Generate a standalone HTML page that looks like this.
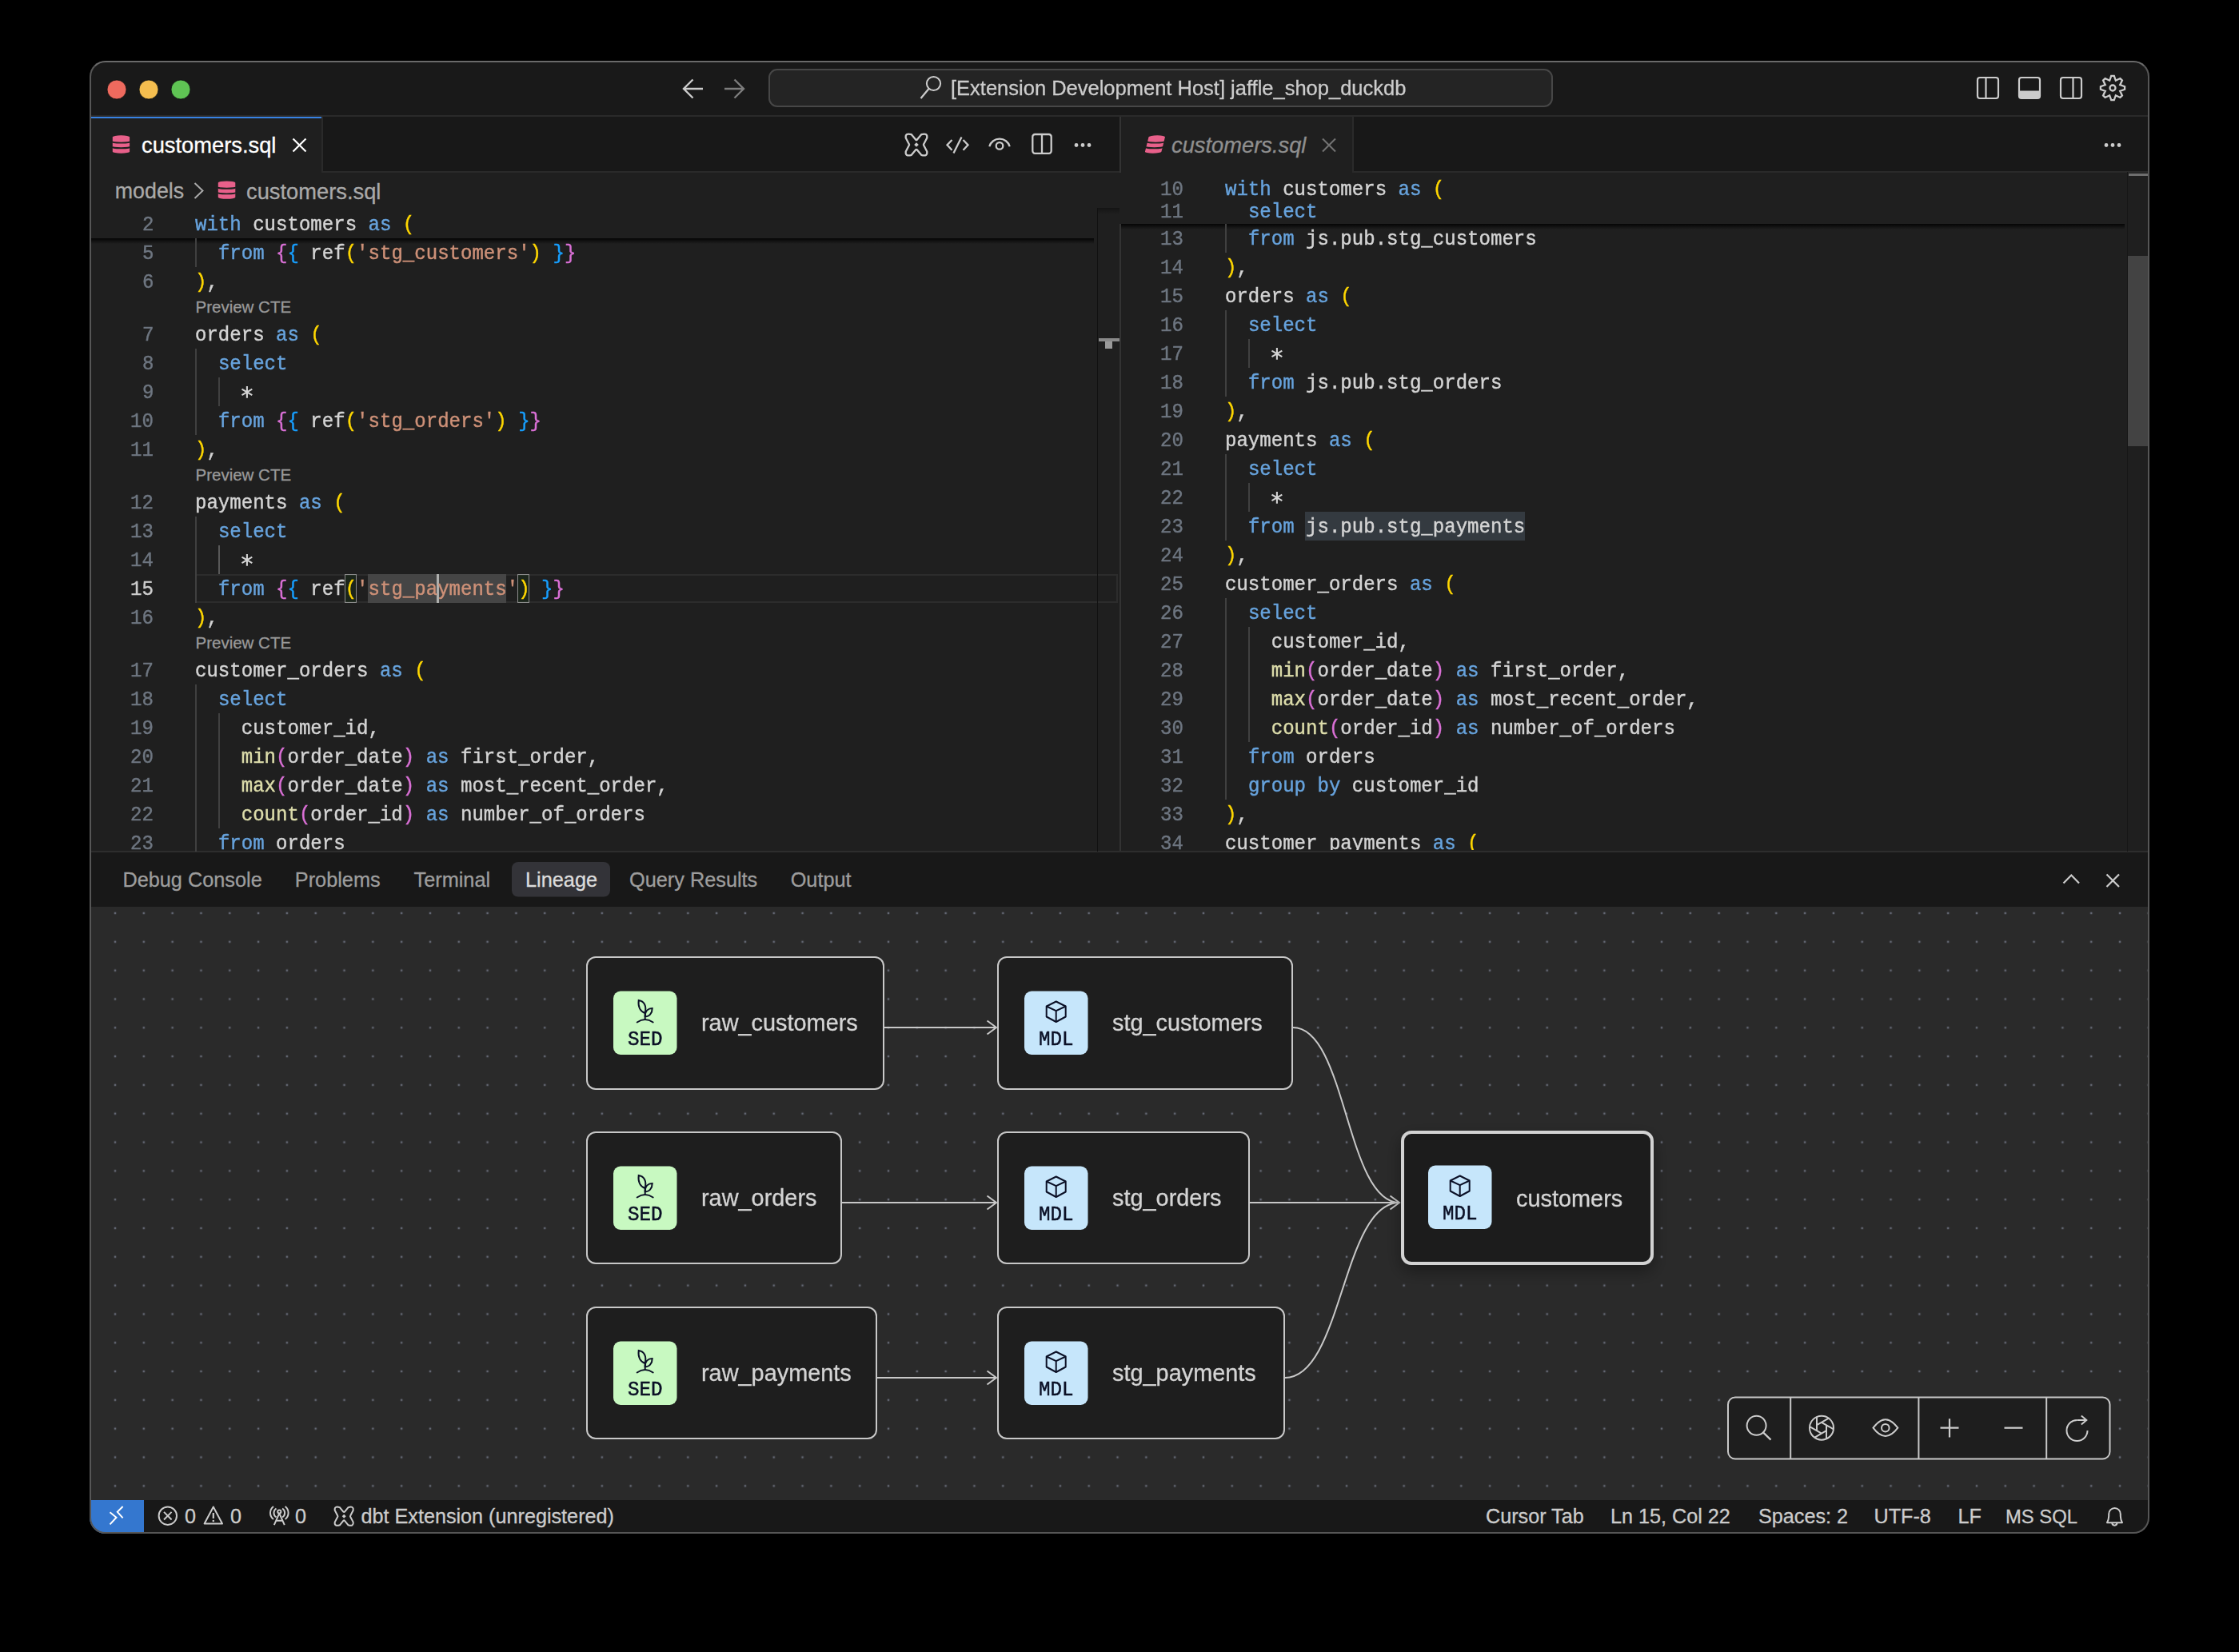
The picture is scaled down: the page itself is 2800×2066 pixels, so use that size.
<!DOCTYPE html>
<html><head><meta charset="utf-8"><title>VS Code - customers.sql</title>
<style>
*{box-sizing:border-box;margin:0;padding:0}
html,body{width:2800px;height:2066px;background:#000;overflow:hidden}
body{position:relative;font-family:"Liberation Sans",sans-serif;color:#ccc}
.a{position:absolute}
#win{position:absolute;left:112px;top:76px;width:2576px;height:1842px;border-radius:20px;overflow:hidden;background:#1f1f1f}
#P{position:absolute;left:-112px;top:-76px;width:2800px;height:2066px}
#winborder{position:absolute;left:112px;top:76px;width:2576px;height:1842px;border-radius:20px;border:2px solid #565656;border-top-color:#6a6a6a;pointer-events:none}
.t{position:absolute;white-space:pre;line-height:1;-webkit-text-stroke-width:0.3px}
svg{position:absolute;left:0;top:0}
</style></head><body>
<div id="win"><div id="P">
<div class="a" style="left:112px;top:76px;width:2576px;height:68px;background:#191919;"></div>
<div class="a" style="left:112px;top:144px;width:2576px;height:2px;background:#2a2a2a;"></div>
<div class="a" style="left:112px;top:146px;width:2576px;height:70px;background:#181818;"></div>
<div class="a" style="left:112px;top:214px;width:2576px;height:2px;background:#2a2a2a;"></div>
<div class="a" style="left:112px;top:146px;width:290px;height:70px;background:#1f1f1f;"></div>
<div class="a" style="left:112px;top:146px;width:290px;height:2px;background:#3782e3;"></div>
<div class="a" style="left:402px;top:146px;width:2px;height:68px;background:#2a2a2a;"></div>
<div class="a" style="left:1402px;top:146px;width:289px;height:70px;background:#1f1f1f;"></div>
<div class="a" style="left:1691px;top:146px;width:2px;height:68px;background:#2a2a2a;"></div>
<div class="a" style="left:112px;top:216px;width:1288px;height:849px;background:#1f1f1f;"></div>
<div class="a" style="left:1400px;top:146px;width:2px;height:918px;background:#333333;"></div>
<div class="a" style="left:1402px;top:216px;width:1286px;height:849px;background:#1f1f1f;"></div>
<div class="a" style="left:112px;top:1064px;width:2576px;height:2px;background:#2d2d2d;"></div>
<div class="a" style="left:112px;top:1066px;width:2576px;height:68px;background:#181818;"></div>
<div class="a" style="left:112px;top:1134px;width:2576px;height:742px;background:#2a2a2a;"></div>
<div class="a" style="left:112px;top:1876px;width:2576px;height:42px;background:#181818;"></div>
<div class="a" style="left:112px;top:1876px;width:68px;height:42px;background:#3477cf;"></div>
<div class="a" style="left:1372px;top:260px;width:1px;height:805px;background:#161616;"></div>
<div class="a" style="left:1372px;top:260px;width:28px;height:8px;background:linear-gradient(#141414,#1f1f1f);"></div>
<div class="a" style="left:1374px;top:423px;width:26px;height:4px;background:#8a8a8a;"></div>
<div class="a" style="left:1382px;top:427px;width:9px;height:9px;background:#9a9a9a;"></div>
<div class="a" style="left:2660px;top:215px;width:1px;height:850px;background:#161616;"></div>
<div class="a" style="left:2661px;top:320px;width:27px;height:238px;background:#434343;"></div>
<div class="a" style="left:2662px;top:217px;width:26px;height:3px;background:#6e6e6e;"></div>
<div class="a" style="left:1400px;top:216px;width:2px;height:64px;background:#1f1f1f;"></div>
<div class="a" style="left:112px;top:298px;width:1256px;height:7px;background:linear-gradient(rgba(0,0,0,.85),rgba(0,0,0,0));"></div>
<div class="a" style="left:1402px;top:280px;width:1255px;height:7px;background:linear-gradient(rgba(0,0,0,.85),rgba(0,0,0,0));"></div>
<div class="a" style="left:244px;top:718px;width:1154px;height:36px;background:transparent;border:2px solid #2c2c2c;"></div>
<div class="a" style="left:1372px;top:260px;width:1px;height:805px;background:#111111;"></div>
<div class="a" style="left:460px;top:718px;width:173px;height:36px;background:#454545;"></div>
<div class="a" style="left:431px;top:718px;width:15px;height:36px;background:rgba(0,100,0,.10);border:1.5px solid #8b8b8b;"></div>
<div class="a" style="left:647px;top:718px;width:15px;height:36px;background:rgba(0,100,0,.10);border:1.5px solid #8b8b8b;"></div>
<div class="a" style="left:244px;top:298px;width:2px;height:36px;background:#404040;"></div>
<div class="a" style="left:244px;top:436px;width:2px;height:108px;background:#404040;"></div>
<div class="a" style="left:244px;top:646px;width:2px;height:108px;background:#404040;"></div>
<div class="a" style="left:244px;top:856px;width:2px;height:209px;background:#404040;"></div>
<div class="a" style="left:273px;top:472px;width:2px;height:36px;background:#404040;"></div>
<div class="a" style="left:273px;top:682px;width:2px;height:36px;background:#585858;"></div>
<div class="a" style="left:273px;top:892px;width:2px;height:144px;background:#404040;"></div>
<div class="a" style="left:546px;top:718px;width:3px;height:36px;background:#aeafad;"></div>
<div class="a" style="left:1632px;top:640px;width:275px;height:36px;background:#343a40;"></div>
<div class="a" style="left:1532px;top:280px;width:2px;height:36px;background:#404040;"></div>
<div class="a" style="left:1532px;top:388px;width:2px;height:108px;background:#404040;"></div>
<div class="a" style="left:1532px;top:568px;width:2px;height:108px;background:#404040;"></div>
<div class="a" style="left:1532px;top:748px;width:2px;height:252px;background:#404040;"></div>
<div class="a" style="left:1561px;top:424px;width:2px;height:36px;background:#404040;"></div>
<div class="a" style="left:1561px;top:604px;width:2px;height:36px;background:#404040;"></div>
<div class="a" style="left:1561px;top:784px;width:2px;height:144px;background:#404040;"></div>
<svg width="2800" height="2066" viewBox="0 0 2800 2066">
<circle cx="146" cy="112" r="12" fill="#ee6a5e" stroke="#0d1010" stroke-width="0.8"/>
<circle cx="186" cy="112" r="12" fill="#f5be4f" stroke="#0d1010" stroke-width="0.8"/>
<circle cx="226" cy="112" r="12" fill="#5fc454" stroke="#0d1010" stroke-width="0.8"/>
<path d="M855 111H879M866.5 99.5L855 111L866.5 122.5" fill="none" stroke="#cccccc" stroke-width="2.4"/>
<path d="M906 111H930M918.5 99.5L930 111L918.5 122.5" fill="none" stroke="#7d7d7d" stroke-width="2.4"/>
<rect x="962" y="87" width="979" height="46" rx="10" fill="#242424" stroke="#474747" stroke-width="2"/>
<circle cx="1167.5" cy="104.5" r="8.6" fill="none" stroke="#cccccc" stroke-width="2"/>
<path d="M1161.5 111L1151.5 123" stroke="#cccccc" stroke-width="2.2"/>
<rect x="2473" y="97" width="26" height="26" rx="3" fill="none" stroke="#cccccc" stroke-width="2.2"/><path d="M2483.5 97V123" stroke="#cccccc" stroke-width="2.2"/>
<rect x="2525" y="97" width="26" height="26" rx="3" fill="none" stroke="#cccccc" stroke-width="2.2"/><path d="M2525 113.5H2551V120A3 3 0 0 1 2548 123H2528A3 3 0 0 1 2525 120Z" fill="#cccccc"/>
<rect x="2577" y="97" width="26" height="26" rx="3" fill="none" stroke="#cccccc" stroke-width="2.2"/><path d="M2592.5 97V123" stroke="#cccccc" stroke-width="2.2"/>
<path d="M2638.17 100.76 L2640.21 94.91 L2643.79 94.91 L2645.83 100.76 L2651.41 98.06 L2653.94 100.59 L2651.24 106.17 L2657.09 108.21 L2657.09 111.79 L2651.24 113.83 L2653.94 119.41 L2651.41 121.94 L2645.83 119.24 L2643.79 125.09 L2640.21 125.09 L2638.17 119.24 L2632.59 121.94 L2630.06 119.41 L2632.76 113.83 L2626.91 111.79 L2626.91 108.21 L2632.76 106.17 L2630.06 100.59 L2632.59 98.06Z" fill="none" stroke="#cccccc" stroke-width="2.3" stroke-linejoin="miter"/><circle cx="2642" cy="110" r="3.5" fill="none" stroke="#cccccc" stroke-width="2.3"/>
<g transform="translate(140.8 169.3)"><path d="M0 2.0 A10.65 2.0 0 0 1 21.3 2.0 V20.4 A10.65 2.0 0 0 1 0 20.4 Z" fill="#e8608a"/><path d="M-1 7.73 A11.65 1.6 0 0 0 22.3 7.73" fill="none" stroke="#1f1f1f" stroke-width="1.9"/><path d="M-1 14.34 A11.65 1.6 0 0 0 22.3 14.34" fill="none" stroke="#1f1f1f" stroke-width="1.9"/></g>
<path d="M366.5 173.5L382.5 189.5M382.5 173.5L366.5 189.5" stroke="#ffffff" stroke-width="2.2"/>
<g transform="translate(1437 169.3) skewX(-14)"><path d="M0 2.0 A10.25 2.0 0 0 1 20.5 2.0 V20.4 A10.25 2.0 0 0 1 0 20.4 Z" fill="#e8608a"/><path d="M-1 7.73 A11.25 1.6 0 0 0 21.5 7.73" fill="none" stroke="#1f1f1f" stroke-width="1.9"/><path d="M-1 14.34 A11.25 1.6 0 0 0 21.5 14.34" fill="none" stroke="#1f1f1f" stroke-width="1.9"/></g>
<path d="M1654 173.5L1670 189.5M1670 173.5L1654 189.5" stroke="#737373" stroke-width="2"/>
<circle cx="2634" cy="181.5" r="2.4" fill="#cccccc"/><circle cx="2642" cy="181.5" r="2.4" fill="#cccccc"/><circle cx="2650" cy="181.5" r="2.4" fill="#cccccc"/>
<path d="M1139.85 168.22 L1145.24 174.75 Q1146.00 175.32 1146.76 174.75 L1152.15 168.22 Q1160.20 165.86 1159.25 172.48 L1155.09 180.43 Q1154.71 181.00 1155.09 181.57 L1159.25 189.52 Q1160.20 196.14 1152.15 193.78 L1146.76 187.25 Q1146.00 186.68 1145.24 187.25 L1139.85 193.78 Q1131.80 196.14 1132.75 189.52 L1136.91 181.57 Q1137.29 181.00 1136.91 180.43 L1132.75 172.48 Q1131.80 165.86 1139.85 168.22 Z" fill="none" stroke="#cccccc" stroke-width="2.3" stroke-linejoin="round"/><path d="M1146.00 178.16 L1148.84 181.00 L1146.00 183.84 L1143.16 181.00 Z" fill="#cccccc"/>
<path d="M1190.5 175L1184.5 181.3L1190.5 187.7M1204.5 175L1210.5 181.3L1204.5 187.7M1202.5 171.5L1192.5 191.5" fill="none" stroke="#cccccc" stroke-width="2.3"/>
<path d="M1237.3 183.2A13.2 13.2 0 0 1 1262.7 183.2" fill="none" stroke="#cccccc" stroke-width="2.3"/><circle cx="1250" cy="182.4" r="4.3" fill="none" stroke="#cccccc" stroke-width="2.3"/>
<rect x="1291.3" y="168" width="23.4" height="23.8" rx="3" fill="none" stroke="#cccccc" stroke-width="2.3"/><path d="M1303 168V191.8" stroke="#cccccc" stroke-width="2.3"/>
<circle cx="1346" cy="181.5" r="2.4" fill="#cccccc"/><circle cx="1354" cy="181.5" r="2.4" fill="#cccccc"/><circle cx="1362" cy="181.5" r="2.4" fill="#cccccc"/>
<path d="M243.5 229L253.5 238.5L243.5 248" fill="none" stroke="#a9a9a9" stroke-width="2"/>
<g transform="translate(272.8 226.4)"><path d="M0 2.0 A10.75 2.0 0 0 1 21.5 2.0 V20.4 A10.75 2.0 0 0 1 0 20.4 Z" fill="#e8608a"/><path d="M-1 7.73 A11.75 1.6 0 0 0 22.5 7.73" fill="none" stroke="#1f1f1f" stroke-width="1.9"/><path d="M-1 14.34 A11.75 1.6 0 0 0 22.5 14.34" fill="none" stroke="#1f1f1f" stroke-width="1.9"/></g>
<path d="M308.90 483.00L308.90 497.80M302.49 486.70L315.31 494.10M315.31 486.70L302.49 494.10" stroke="#d4d4d4" stroke-width="2.1" stroke-linecap="butt"/>
<path d="M308.90 693.00L308.90 707.80M302.49 696.70L315.31 704.10M315.31 696.70L302.49 704.10" stroke="#d4d4d4" stroke-width="2.1" stroke-linecap="butt"/>
<path d="M1596.90 435.00L1596.90 449.80M1590.49 438.70L1603.31 446.10M1603.31 438.70L1590.49 446.10" stroke="#d4d4d4" stroke-width="2.1" stroke-linecap="butt"/>
<path d="M1596.90 615.00L1596.90 629.80M1590.49 618.70L1603.31 626.10M1603.31 618.70L1590.49 626.10" stroke="#d4d4d4" stroke-width="2.1" stroke-linecap="butt"/>
<rect x="640" y="1078" width="123" height="43.5" rx="8" fill="#333338"/>
<path d="M2580.5 1104.5L2590.3 1094.5L2600 1104.5" fill="none" stroke="#cccccc" stroke-width="2.2"/>
<path d="M2634.5 1093.5L2650 1109M2650 1093.5L2634.5 1109" fill="none" stroke="#cccccc" stroke-width="2.2"/>
<defs><pattern id="dots" x="144" y="1142" width="35.815" height="35.815" patternUnits="userSpaceOnUse"><rect x="-1.25" y="-1.25" width="2.5" height="2.5" fill="#636773"/><rect x="34.565" y="-1.25" width="2.5" height="2.5" fill="#636773"/><rect x="-1.25" y="34.565" width="2.5" height="2.5" fill="#636773"/><rect x="34.565" y="34.565" width="2.5" height="2.5" fill="#636773"/></pattern><filter id="sh" x="-20%" y="-20%" width="140%" height="150%"><feDropShadow dx="0" dy="8" stdDeviation="10" flood-color="#000" flood-opacity="0.35"/></filter></defs>
<rect x="112" y="1134" width="2576" height="742" fill="url(#dots)"/>
<path d="M1106 1285C1176.0 1285 1176.0 1285 1246 1285" fill="none" stroke="#c8c8c8" stroke-width="2"/><path d="M1234.5 1276.5L1246 1285L1234.5 1293.5" fill="none" stroke="#c8c8c8" stroke-width="2"/>
<path d="M1053 1504C1149.5 1504 1149.5 1504 1246 1504" fill="none" stroke="#c8c8c8" stroke-width="2"/><path d="M1234.5 1495.5L1246 1504L1234.5 1512.5" fill="none" stroke="#c8c8c8" stroke-width="2"/>
<path d="M1097 1723C1171.5 1723 1171.5 1723 1246 1723" fill="none" stroke="#c8c8c8" stroke-width="2"/><path d="M1234.5 1714.5L1246 1723L1234.5 1731.5" fill="none" stroke="#c8c8c8" stroke-width="2"/>
<path d="M1617 1285C1683.5 1285 1683.5 1504 1750 1504" fill="none" stroke="#c8c8c8" stroke-width="2"/>
<path d="M1563 1504C1656.5 1504 1656.5 1504 1750 1504" fill="none" stroke="#c8c8c8" stroke-width="2"/>
<path d="M1607 1723C1678.5 1723 1678.5 1504 1750 1504" fill="none" stroke="#c8c8c8" stroke-width="2"/>
<path d="M1738.5 1495.5L1750 1504L1738.5 1512.5" fill="none" stroke="#c8c8c8" stroke-width="2"/>
<rect x="734.0" y="1197.0" width="371" height="165" rx="11" fill="#1e1e1e" stroke="#c8c8c8" stroke-width="2"/>
<rect x="767" y="1239.5" width="79.5" height="79.5" rx="9" fill="#c8f9c1"/>
<g transform="translate(806.7 1265.0)" fill="none" stroke="#0b1026" stroke-width="2" stroke-linecap="round"><path d="M-10 13.5Q0 6.5 10 13.5"/><path d="M0 10V2"/><path d="M0 2C-6 0 -9 -6 -8 -14C-1 -13 2 -7 0 2Z"/><path d="M0 6C5 7 9 2 9 -4C4 -4 0 -1 0 6Z"/></g>
<rect x="1248.0" y="1197.0" width="368" height="165" rx="11" fill="#1e1e1e" stroke="#c8c8c8" stroke-width="2"/>
<rect x="1281" y="1239.5" width="79.5" height="79.5" rx="9" fill="#c6e6fb"/>
<g transform="translate(1320.7 1265.0)" fill="none" stroke="#0b1026" stroke-width="2" stroke-linejoin="round"><path d="M0 -12.5L12 -6.5V6.5L0 13L-12 6.5V-6.5Z"/><path d="M-12 -6.5L0 -0.8L12 -6.5M0 -0.8V13"/></g>
<rect x="734.0" y="1416.0" width="318" height="164" rx="11" fill="#1e1e1e" stroke="#c8c8c8" stroke-width="2"/>
<rect x="767" y="1458.5" width="79.5" height="79.5" rx="9" fill="#c8f9c1"/>
<g transform="translate(806.7 1484.0)" fill="none" stroke="#0b1026" stroke-width="2" stroke-linecap="round"><path d="M-10 13.5Q0 6.5 10 13.5"/><path d="M0 10V2"/><path d="M0 2C-6 0 -9 -6 -8 -14C-1 -13 2 -7 0 2Z"/><path d="M0 6C5 7 9 2 9 -4C4 -4 0 -1 0 6Z"/></g>
<rect x="1248.0" y="1416.0" width="314" height="164" rx="11" fill="#1e1e1e" stroke="#c8c8c8" stroke-width="2"/>
<rect x="1281" y="1458.5" width="79.5" height="79.5" rx="9" fill="#c6e6fb"/>
<g transform="translate(1320.7 1484.0)" fill="none" stroke="#0b1026" stroke-width="2" stroke-linejoin="round"><path d="M0 -12.5L12 -6.5V6.5L0 13L-12 6.5V-6.5Z"/><path d="M-12 -6.5L0 -0.8L12 -6.5M0 -0.8V13"/></g>
<rect x="734.0" y="1635.0" width="362" height="164" rx="11" fill="#1e1e1e" stroke="#c8c8c8" stroke-width="2"/>
<rect x="767" y="1677.5" width="79.5" height="79.5" rx="9" fill="#c8f9c1"/>
<g transform="translate(806.7 1703.0)" fill="none" stroke="#0b1026" stroke-width="2" stroke-linecap="round"><path d="M-10 13.5Q0 6.5 10 13.5"/><path d="M0 10V2"/><path d="M0 2C-6 0 -9 -6 -8 -14C-1 -13 2 -7 0 2Z"/><path d="M0 6C5 7 9 2 9 -4C4 -4 0 -1 0 6Z"/></g>
<rect x="1248.0" y="1635.0" width="358" height="164" rx="11" fill="#1e1e1e" stroke="#c8c8c8" stroke-width="2"/>
<rect x="1281" y="1677.5" width="79.5" height="79.5" rx="9" fill="#c6e6fb"/>
<g transform="translate(1320.7 1703.0)" fill="none" stroke="#0b1026" stroke-width="2" stroke-linejoin="round"><path d="M0 -12.5L12 -6.5V6.5L0 13L-12 6.5V-6.5Z"/><path d="M-12 -6.5L0 -0.8L12 -6.5M0 -0.8V13"/></g>
<rect x="1754.0" y="1416.0" width="312" height="164" rx="11" fill="#1e1e1e" stroke="#d2d2d2" stroke-width="4" filter="url(#sh)"/>
<rect x="1786" y="1457.5" width="79.5" height="79.5" rx="9" fill="#c6e6fb"/>
<g transform="translate(1825.7 1483.0)" fill="none" stroke="#0b1026" stroke-width="2" stroke-linejoin="round"><path d="M0 -12.5L12 -6.5V6.5L0 13L-12 6.5V-6.5Z"/><path d="M-12 -6.5L0 -0.8L12 -6.5M0 -0.8V13"/></g>
<rect x="2161" y="1747.5" width="477.5" height="77" rx="9" fill="#1e1e1e" stroke="#c8c8c8" stroke-width="2"/>
<path d="M2239.2 1748V1824" stroke="#c8c8c8" stroke-width="2"/>
<path d="M2399.4 1748V1824" stroke="#c8c8c8" stroke-width="2"/>
<path d="M2559.2 1748V1824" stroke="#c8c8c8" stroke-width="2"/>
<circle cx="2196.6" cy="1782.8" r="12" fill="none" stroke="#cccccc" stroke-width="2"/><path d="M2205.2 1791.6L2214.5 1800.6" stroke="#cccccc" stroke-width="2.2"/>
<g fill="none" stroke="#cccccc" stroke-width="2" transform="rotate(-90 2278 1785.7)"><circle cx="2278" cy="1785.7" r="15"/><path d="M2281.47 1779.70L2290.07 1794.61M2274.53 1779.70L2291.76 1779.70M2271.07 1785.70L2279.68 1770.79M2274.53 1791.70L2265.93 1776.79M2281.47 1791.70L2264.24 1791.70M2284.93 1785.70L2276.32 1800.61"/></g>
<path d="M2342.5 1785.7Q2357.8 1765 2373.3 1785.7Q2357.8 1806.4 2342.5 1785.7Z" fill="none" stroke="#cccccc" stroke-width="2"/><circle cx="2357.8" cy="1785.7" r="4.8" fill="none" stroke="#cccccc" stroke-width="2"/>
<path d="M2426.5 1785.7H2449.5M2438 1774.2V1797.4" stroke="#cccccc" stroke-width="2.2"/>
<path d="M2506.5 1785.7H2529.5" stroke="#cccccc" stroke-width="2.2"/>
<path d="M2597.5 1776A13 13 0 1 0 2610.5 1789" fill="none" stroke="#cccccc" stroke-width="2"/><path d="M2597.5 1776H2609M2602.8 1770.5L2609.3 1776L2602.8 1781.5" fill="none" stroke="#cccccc" stroke-width="2"/>
<path d="M137.5 1891.3L145.5 1897.8L137.5 1906.4M153.6 1884L146.8 1890.8L153.6 1898.4" fill="none" stroke="#ffffff" stroke-width="2"/>
<circle cx="209.8" cy="1895.7" r="11.2" fill="none" stroke="#cccccc" stroke-width="2"/><path d="M205 1890.9L214.6 1900.5M214.6 1890.9L205 1900.5" stroke="#cccccc" stroke-width="2"/>
<path d="M266.8 1884.5L278 1905.5H255.6Z" fill="none" stroke="#cccccc" stroke-width="2" stroke-linejoin="round"/><path d="M266.8 1892V1899" stroke="#cccccc" stroke-width="2.2"/><circle cx="266.8" cy="1902" r="1.3" fill="#cccccc"/>
<g fill="none" stroke="#cccccc" stroke-width="2"><path d="M342 1884A10 10 0 0 0 342 1900M356.6 1884A10 10 0 0 1 356.6 1900M345.5 1886.5A6.5 6.5 0 0 0 345.5 1897.5M353.1 1886.5A6.5 6.5 0 0 1 353.1 1897.5"/><circle cx="349.3" cy="1890.5" r="2.1"/><path d="M349.3 1892.6L342.8 1907.2M349.3 1892.6L355.8 1907.2M345.3 1901.8H353.3"/></g>
<path d="M424.86 1885.11 L429.54 1890.78 Q430.20 1891.27 430.86 1890.78 L435.54 1885.11 Q442.52 1883.06 441.70 1888.81 L438.09 1895.71 Q437.76 1896.20 438.09 1896.69 L441.70 1903.59 Q442.52 1909.34 435.54 1907.29 L430.86 1901.62 Q430.20 1901.13 429.54 1901.62 L424.86 1907.29 Q417.88 1909.34 418.70 1903.59 L422.31 1896.69 Q422.64 1896.20 422.31 1895.71 L418.70 1888.81 Q417.88 1883.06 424.86 1885.11 Z" fill="none" stroke="#cccccc" stroke-width="2" stroke-linejoin="round"/><path d="M430.20 1893.74 L432.66 1896.20 L430.20 1898.66 L427.74 1896.20 Z" fill="#cccccc"/>
<path d="M2637.2 1893.5A7.3 7.6 0 0 1 2651.8 1893.5V1896Q2652 1901 2654 1904.2H2635Q2637 1901 2637.2 1896Z" fill="none" stroke="#cccccc" stroke-width="2" stroke-linejoin="round"/><path d="M2641.3 1904.6A3.1 3.1 0 0 0 2647.5 1904.6" fill="none" stroke="#cccccc" stroke-width="2"/>
</svg>
<div class="t" style="left:1189px;top:98.03px;font-size:25.0px;font-family:'Liberation Sans',sans-serif;color:#cccccc;transform:scaleX(1.02);transform-origin:0 0;">[Extension Development Host] jaffle_shop_duckdb</div>
<div class="t" style="left:177px;top:167.89px;font-size:27.3px;font-family:'Liberation Sans',sans-serif;color:#ffffff;">customers.sql</div>
<div class="t" style="left:1465px;top:167.89px;font-size:27.3px;font-family:'Liberation Sans',sans-serif;color:#8f8f8f;font-style:italic;">customers.sql</div>
<div class="t" style="left:143.8px;top:226.31px;font-size:26.8px;font-family:'Liberation Sans',sans-serif;color:#a9a9a9;">models</div>
<div class="t" style="left:308px;top:225.89px;font-size:27.3px;font-family:'Liberation Sans',sans-serif;color:#a9a9a9;">customers.sql</div>
<div style="position:absolute;left:112px;top:215px;width:1260px;height:848px;overflow:hidden"><div style="position:absolute;left:-112px;top:-215px;width:2800px;height:2066px">
<div class="t" style="left:243.5px;top:267.58px;font-size:26px;font-family:'Liberation Mono',monospace;color:#d4d4d4;transform:scaleX(0.9250);transform-origin:0 0;-webkit-text-stroke-width:0.45px;"><span style="color:#67a3dd">with</span><span style="color:#d4d4d4"> customers </span><span style="color:#67a3dd">as</span><span style="color:#d4d4d4"> </span><span style="color:#ffd700">(</span></div>
<div class="t" style="left:177.57px;top:267.58px;font-size:26px;font-family:'Liberation Mono',monospace;color:#6e7681;transform:scaleX(0.9250);transform-origin:0 0;-webkit-text-stroke-width:0.45px;">2</div>
<div class="t" style="left:243.5px;top:304.08px;font-size:26px;font-family:'Liberation Mono',monospace;color:#d4d4d4;transform:scaleX(0.9250);transform-origin:0 0;-webkit-text-stroke-width:0.45px;"><span style="color:#d4d4d4">  </span><span style="color:#67a3dd">from</span><span style="color:#d4d4d4"> </span><span style="color:#da70d6">{</span><span style="color:#179fff">{</span><span style="color:#d4d4d4"> ref</span><span style="color:#ffd700">(</span><span style="color:#ce9178">'stg_customers'</span><span style="color:#ffd700">)</span><span style="color:#d4d4d4"> </span><span style="color:#179fff">}</span><span style="color:#da70d6">}</span></div>
<div class="t" style="left:177.57px;top:304.08px;font-size:26px;font-family:'Liberation Mono',monospace;color:#6e7681;transform:scaleX(0.9250);transform-origin:0 0;-webkit-text-stroke-width:0.45px;">5</div>
<div class="t" style="left:243.5px;top:340.08px;font-size:26px;font-family:'Liberation Mono',monospace;color:#d4d4d4;transform:scaleX(0.9250);transform-origin:0 0;-webkit-text-stroke-width:0.45px;"><span style="color:#ffd700">)</span><span style="color:#d4d4d4">,</span></div>
<div class="t" style="left:177.57px;top:340.08px;font-size:26px;font-family:'Liberation Mono',monospace;color:#6e7681;transform:scaleX(0.9250);transform-origin:0 0;-webkit-text-stroke-width:0.45px;">6</div>
<div class="t" style="left:243.5px;top:406.08px;font-size:26px;font-family:'Liberation Mono',monospace;color:#d4d4d4;transform:scaleX(0.9250);transform-origin:0 0;-webkit-text-stroke-width:0.45px;"><span style="color:#d4d4d4">orders</span><span style="color:#d4d4d4"> </span><span style="color:#67a3dd">as</span><span style="color:#d4d4d4"> </span><span style="color:#ffd700">(</span></div>
<div class="t" style="left:177.57px;top:406.08px;font-size:26px;font-family:'Liberation Mono',monospace;color:#6e7681;transform:scaleX(0.9250);transform-origin:0 0;-webkit-text-stroke-width:0.45px;">7</div>
<div class="t" style="left:243.5px;top:442.08px;font-size:26px;font-family:'Liberation Mono',monospace;color:#d4d4d4;transform:scaleX(0.9250);transform-origin:0 0;-webkit-text-stroke-width:0.45px;"><span style="color:#d4d4d4">  </span><span style="color:#67a3dd">select</span></div>
<div class="t" style="left:177.57px;top:442.08px;font-size:26px;font-family:'Liberation Mono',monospace;color:#6e7681;transform:scaleX(0.9250);transform-origin:0 0;-webkit-text-stroke-width:0.45px;">8</div>
<div class="t" style="left:243.5px;top:478.08px;font-size:26px;font-family:'Liberation Mono',monospace;color:#d4d4d4;transform:scaleX(0.9250);transform-origin:0 0;-webkit-text-stroke-width:0.45px;"><span style="color:#d4d4d4"></span></div>
<div class="t" style="left:177.57px;top:478.08px;font-size:26px;font-family:'Liberation Mono',monospace;color:#6e7681;transform:scaleX(0.9250);transform-origin:0 0;-webkit-text-stroke-width:0.45px;">9</div>
<div class="t" style="left:243.5px;top:514.08px;font-size:26px;font-family:'Liberation Mono',monospace;color:#d4d4d4;transform:scaleX(0.9250);transform-origin:0 0;-webkit-text-stroke-width:0.45px;"><span style="color:#d4d4d4">  </span><span style="color:#67a3dd">from</span><span style="color:#d4d4d4"> </span><span style="color:#da70d6">{</span><span style="color:#179fff">{</span><span style="color:#d4d4d4"> ref</span><span style="color:#ffd700">(</span><span style="color:#ce9178">'stg_orders'</span><span style="color:#ffd700">)</span><span style="color:#d4d4d4"> </span><span style="color:#179fff">}</span><span style="color:#da70d6">}</span></div>
<div class="t" style="left:163.14px;top:514.08px;font-size:26px;font-family:'Liberation Mono',monospace;color:#6e7681;transform:scaleX(0.9250);transform-origin:0 0;-webkit-text-stroke-width:0.45px;">10</div>
<div class="t" style="left:243.5px;top:550.08px;font-size:26px;font-family:'Liberation Mono',monospace;color:#d4d4d4;transform:scaleX(0.9250);transform-origin:0 0;-webkit-text-stroke-width:0.45px;"><span style="color:#ffd700">)</span><span style="color:#d4d4d4">,</span></div>
<div class="t" style="left:163.14px;top:550.08px;font-size:26px;font-family:'Liberation Mono',monospace;color:#6e7681;transform:scaleX(0.9250);transform-origin:0 0;-webkit-text-stroke-width:0.45px;">11</div>
<div class="t" style="left:243.5px;top:616.08px;font-size:26px;font-family:'Liberation Mono',monospace;color:#d4d4d4;transform:scaleX(0.9250);transform-origin:0 0;-webkit-text-stroke-width:0.45px;"><span style="color:#d4d4d4">payments</span><span style="color:#d4d4d4"> </span><span style="color:#67a3dd">as</span><span style="color:#d4d4d4"> </span><span style="color:#ffd700">(</span></div>
<div class="t" style="left:163.14px;top:616.08px;font-size:26px;font-family:'Liberation Mono',monospace;color:#6e7681;transform:scaleX(0.9250);transform-origin:0 0;-webkit-text-stroke-width:0.45px;">12</div>
<div class="t" style="left:243.5px;top:652.08px;font-size:26px;font-family:'Liberation Mono',monospace;color:#d4d4d4;transform:scaleX(0.9250);transform-origin:0 0;-webkit-text-stroke-width:0.45px;"><span style="color:#d4d4d4">  </span><span style="color:#67a3dd">select</span></div>
<div class="t" style="left:163.14px;top:652.08px;font-size:26px;font-family:'Liberation Mono',monospace;color:#6e7681;transform:scaleX(0.9250);transform-origin:0 0;-webkit-text-stroke-width:0.45px;">13</div>
<div class="t" style="left:243.5px;top:688.08px;font-size:26px;font-family:'Liberation Mono',monospace;color:#d4d4d4;transform:scaleX(0.9250);transform-origin:0 0;-webkit-text-stroke-width:0.45px;"><span style="color:#d4d4d4"></span></div>
<div class="t" style="left:163.14px;top:688.08px;font-size:26px;font-family:'Liberation Mono',monospace;color:#6e7681;transform:scaleX(0.9250);transform-origin:0 0;-webkit-text-stroke-width:0.45px;">14</div>
<div class="t" style="left:243.5px;top:724.08px;font-size:26px;font-family:'Liberation Mono',monospace;color:#d4d4d4;transform:scaleX(0.9250);transform-origin:0 0;-webkit-text-stroke-width:0.45px;"><span style="color:#d4d4d4">  </span><span style="color:#67a3dd">from</span><span style="color:#d4d4d4"> </span><span style="color:#da70d6">{</span><span style="color:#179fff">{</span><span style="color:#d4d4d4"> ref</span><span style="color:#ffd700">(</span><span style="color:#ce9178">'stg_payments'</span><span style="color:#ffd700">)</span><span style="color:#d4d4d4"> </span><span style="color:#179fff">}</span><span style="color:#da70d6">}</span></div>
<div class="t" style="left:163.14px;top:724.08px;font-size:26px;font-family:'Liberation Mono',monospace;color:#cccccc;transform:scaleX(0.9250);transform-origin:0 0;-webkit-text-stroke-width:0.45px;">15</div>
<div class="t" style="left:243.5px;top:760.08px;font-size:26px;font-family:'Liberation Mono',monospace;color:#d4d4d4;transform:scaleX(0.9250);transform-origin:0 0;-webkit-text-stroke-width:0.45px;"><span style="color:#ffd700">)</span><span style="color:#d4d4d4">,</span></div>
<div class="t" style="left:163.14px;top:760.08px;font-size:26px;font-family:'Liberation Mono',monospace;color:#6e7681;transform:scaleX(0.9250);transform-origin:0 0;-webkit-text-stroke-width:0.45px;">16</div>
<div class="t" style="left:243.5px;top:826.08px;font-size:26px;font-family:'Liberation Mono',monospace;color:#d4d4d4;transform:scaleX(0.9250);transform-origin:0 0;-webkit-text-stroke-width:0.45px;"><span style="color:#d4d4d4">customer_orders</span><span style="color:#d4d4d4"> </span><span style="color:#67a3dd">as</span><span style="color:#d4d4d4"> </span><span style="color:#ffd700">(</span></div>
<div class="t" style="left:163.14px;top:826.08px;font-size:26px;font-family:'Liberation Mono',monospace;color:#6e7681;transform:scaleX(0.9250);transform-origin:0 0;-webkit-text-stroke-width:0.45px;">17</div>
<div class="t" style="left:243.5px;top:862.08px;font-size:26px;font-family:'Liberation Mono',monospace;color:#d4d4d4;transform:scaleX(0.9250);transform-origin:0 0;-webkit-text-stroke-width:0.45px;"><span style="color:#d4d4d4">  </span><span style="color:#67a3dd">select</span></div>
<div class="t" style="left:163.14px;top:862.08px;font-size:26px;font-family:'Liberation Mono',monospace;color:#6e7681;transform:scaleX(0.9250);transform-origin:0 0;-webkit-text-stroke-width:0.45px;">18</div>
<div class="t" style="left:243.5px;top:898.08px;font-size:26px;font-family:'Liberation Mono',monospace;color:#d4d4d4;transform:scaleX(0.9250);transform-origin:0 0;-webkit-text-stroke-width:0.45px;"><span style="color:#d4d4d4">    customer_id,</span></div>
<div class="t" style="left:163.14px;top:898.08px;font-size:26px;font-family:'Liberation Mono',monospace;color:#6e7681;transform:scaleX(0.9250);transform-origin:0 0;-webkit-text-stroke-width:0.45px;">19</div>
<div class="t" style="left:243.5px;top:934.08px;font-size:26px;font-family:'Liberation Mono',monospace;color:#d4d4d4;transform:scaleX(0.9250);transform-origin:0 0;-webkit-text-stroke-width:0.45px;"><span style="color:#d4d4d4">    </span><span style="color:#dcdcaa">min</span><span style="color:#da70d6">(</span><span style="color:#d4d4d4">order_date</span><span style="color:#da70d6">)</span><span style="color:#d4d4d4"> </span><span style="color:#67a3dd">as</span><span style="color:#d4d4d4"> </span><span style="color:#d4d4d4">first_order,</span></div>
<div class="t" style="left:163.14px;top:934.08px;font-size:26px;font-family:'Liberation Mono',monospace;color:#6e7681;transform:scaleX(0.9250);transform-origin:0 0;-webkit-text-stroke-width:0.45px;">20</div>
<div class="t" style="left:243.5px;top:970.08px;font-size:26px;font-family:'Liberation Mono',monospace;color:#d4d4d4;transform:scaleX(0.9250);transform-origin:0 0;-webkit-text-stroke-width:0.45px;"><span style="color:#d4d4d4">    </span><span style="color:#dcdcaa">max</span><span style="color:#da70d6">(</span><span style="color:#d4d4d4">order_date</span><span style="color:#da70d6">)</span><span style="color:#d4d4d4"> </span><span style="color:#67a3dd">as</span><span style="color:#d4d4d4"> </span><span style="color:#d4d4d4">most_recent_order,</span></div>
<div class="t" style="left:163.14px;top:970.08px;font-size:26px;font-family:'Liberation Mono',monospace;color:#6e7681;transform:scaleX(0.9250);transform-origin:0 0;-webkit-text-stroke-width:0.45px;">21</div>
<div class="t" style="left:243.5px;top:1006.08px;font-size:26px;font-family:'Liberation Mono',monospace;color:#d4d4d4;transform:scaleX(0.9250);transform-origin:0 0;-webkit-text-stroke-width:0.45px;"><span style="color:#d4d4d4">    </span><span style="color:#dcdcaa">count</span><span style="color:#da70d6">(</span><span style="color:#d4d4d4">order_id</span><span style="color:#da70d6">)</span><span style="color:#d4d4d4"> </span><span style="color:#67a3dd">as</span><span style="color:#d4d4d4"> </span><span style="color:#d4d4d4">number_of_orders</span></div>
<div class="t" style="left:163.14px;top:1006.08px;font-size:26px;font-family:'Liberation Mono',monospace;color:#6e7681;transform:scaleX(0.9250);transform-origin:0 0;-webkit-text-stroke-width:0.45px;">22</div>
<div class="t" style="left:243.5px;top:1042.08px;font-size:26px;font-family:'Liberation Mono',monospace;color:#d4d4d4;transform:scaleX(0.9250);transform-origin:0 0;-webkit-text-stroke-width:0.45px;"><span style="color:#d4d4d4">  </span><span style="color:#67a3dd">from</span><span style="color:#d4d4d4"> orders</span></div>
<div class="t" style="left:163.14px;top:1042.08px;font-size:26px;font-family:'Liberation Mono',monospace;color:#6e7681;transform:scaleX(0.9250);transform-origin:0 0;-webkit-text-stroke-width:0.45px;">23</div>
<div class="t" style="left:244.5px;top:373.64px;font-size:20.5px;font-family:'Liberation Sans',sans-serif;color:#999999;">Preview CTE</div>
<div class="t" style="left:244.5px;top:583.64px;font-size:20.5px;font-family:'Liberation Sans',sans-serif;color:#999999;">Preview CTE</div>
<div class="t" style="left:244.5px;top:793.64px;font-size:20.5px;font-family:'Liberation Sans',sans-serif;color:#999999;">Preview CTE</div>
</div></div>
<div style="position:absolute;left:1402px;top:215px;width:1258px;height:848px;overflow:hidden"><div style="position:absolute;left:-1402px;top:-215px;width:2800px;height:2066px">
<div class="t" style="left:1531.5px;top:224.08px;font-size:26px;font-family:'Liberation Mono',monospace;color:#d4d4d4;transform:scaleX(0.9250);transform-origin:0 0;-webkit-text-stroke-width:0.45px;"><span style="color:#67a3dd">with</span><span style="color:#d4d4d4"> customers </span><span style="color:#67a3dd">as</span><span style="color:#d4d4d4"> </span><span style="color:#ffd700">(</span></div>
<div class="t" style="left:1450.64px;top:224.08px;font-size:26px;font-family:'Liberation Mono',monospace;color:#6e7681;transform:scaleX(0.9250);transform-origin:0 0;-webkit-text-stroke-width:0.45px;">10</div>
<div class="t" style="left:1531.5px;top:252.08px;font-size:26px;font-family:'Liberation Mono',monospace;color:#d4d4d4;transform:scaleX(0.9250);transform-origin:0 0;-webkit-text-stroke-width:0.45px;"><span style="color:#d4d4d4">  </span><span style="color:#67a3dd">select</span></div>
<div class="t" style="left:1450.64px;top:252.08px;font-size:26px;font-family:'Liberation Mono',monospace;color:#6e7681;transform:scaleX(0.9250);transform-origin:0 0;-webkit-text-stroke-width:0.45px;">11</div>
<div class="t" style="left:1531.5px;top:286.08px;font-size:26px;font-family:'Liberation Mono',monospace;color:#d4d4d4;transform:scaleX(0.9250);transform-origin:0 0;-webkit-text-stroke-width:0.45px;"><span style="color:#d4d4d4">  </span><span style="color:#67a3dd">from</span><span style="color:#d4d4d4"> js.pub.stg_customers</span></div>
<div class="t" style="left:1450.64px;top:286.08px;font-size:26px;font-family:'Liberation Mono',monospace;color:#6e7681;transform:scaleX(0.9250);transform-origin:0 0;-webkit-text-stroke-width:0.45px;">13</div>
<div class="t" style="left:1531.5px;top:322.08px;font-size:26px;font-family:'Liberation Mono',monospace;color:#d4d4d4;transform:scaleX(0.9250);transform-origin:0 0;-webkit-text-stroke-width:0.45px;"><span style="color:#ffd700">)</span><span style="color:#d4d4d4">,</span></div>
<div class="t" style="left:1450.64px;top:322.08px;font-size:26px;font-family:'Liberation Mono',monospace;color:#6e7681;transform:scaleX(0.9250);transform-origin:0 0;-webkit-text-stroke-width:0.45px;">14</div>
<div class="t" style="left:1531.5px;top:358.08px;font-size:26px;font-family:'Liberation Mono',monospace;color:#d4d4d4;transform:scaleX(0.9250);transform-origin:0 0;-webkit-text-stroke-width:0.45px;"><span style="color:#d4d4d4">orders</span><span style="color:#d4d4d4"> </span><span style="color:#67a3dd">as</span><span style="color:#d4d4d4"> </span><span style="color:#ffd700">(</span></div>
<div class="t" style="left:1450.64px;top:358.08px;font-size:26px;font-family:'Liberation Mono',monospace;color:#6e7681;transform:scaleX(0.9250);transform-origin:0 0;-webkit-text-stroke-width:0.45px;">15</div>
<div class="t" style="left:1531.5px;top:394.08px;font-size:26px;font-family:'Liberation Mono',monospace;color:#d4d4d4;transform:scaleX(0.9250);transform-origin:0 0;-webkit-text-stroke-width:0.45px;"><span style="color:#d4d4d4">  </span><span style="color:#67a3dd">select</span></div>
<div class="t" style="left:1450.64px;top:394.08px;font-size:26px;font-family:'Liberation Mono',monospace;color:#6e7681;transform:scaleX(0.9250);transform-origin:0 0;-webkit-text-stroke-width:0.45px;">16</div>
<div class="t" style="left:1531.5px;top:430.08px;font-size:26px;font-family:'Liberation Mono',monospace;color:#d4d4d4;transform:scaleX(0.9250);transform-origin:0 0;-webkit-text-stroke-width:0.45px;"><span style="color:#d4d4d4"></span></div>
<div class="t" style="left:1450.64px;top:430.08px;font-size:26px;font-family:'Liberation Mono',monospace;color:#6e7681;transform:scaleX(0.9250);transform-origin:0 0;-webkit-text-stroke-width:0.45px;">17</div>
<div class="t" style="left:1531.5px;top:466.08px;font-size:26px;font-family:'Liberation Mono',monospace;color:#d4d4d4;transform:scaleX(0.9250);transform-origin:0 0;-webkit-text-stroke-width:0.45px;"><span style="color:#d4d4d4">  </span><span style="color:#67a3dd">from</span><span style="color:#d4d4d4"> js.pub.stg_orders</span></div>
<div class="t" style="left:1450.64px;top:466.08px;font-size:26px;font-family:'Liberation Mono',monospace;color:#6e7681;transform:scaleX(0.9250);transform-origin:0 0;-webkit-text-stroke-width:0.45px;">18</div>
<div class="t" style="left:1531.5px;top:502.08px;font-size:26px;font-family:'Liberation Mono',monospace;color:#d4d4d4;transform:scaleX(0.9250);transform-origin:0 0;-webkit-text-stroke-width:0.45px;"><span style="color:#ffd700">)</span><span style="color:#d4d4d4">,</span></div>
<div class="t" style="left:1450.64px;top:502.08px;font-size:26px;font-family:'Liberation Mono',monospace;color:#6e7681;transform:scaleX(0.9250);transform-origin:0 0;-webkit-text-stroke-width:0.45px;">19</div>
<div class="t" style="left:1531.5px;top:538.08px;font-size:26px;font-family:'Liberation Mono',monospace;color:#d4d4d4;transform:scaleX(0.9250);transform-origin:0 0;-webkit-text-stroke-width:0.45px;"><span style="color:#d4d4d4">payments</span><span style="color:#d4d4d4"> </span><span style="color:#67a3dd">as</span><span style="color:#d4d4d4"> </span><span style="color:#ffd700">(</span></div>
<div class="t" style="left:1450.64px;top:538.08px;font-size:26px;font-family:'Liberation Mono',monospace;color:#6e7681;transform:scaleX(0.9250);transform-origin:0 0;-webkit-text-stroke-width:0.45px;">20</div>
<div class="t" style="left:1531.5px;top:574.08px;font-size:26px;font-family:'Liberation Mono',monospace;color:#d4d4d4;transform:scaleX(0.9250);transform-origin:0 0;-webkit-text-stroke-width:0.45px;"><span style="color:#d4d4d4">  </span><span style="color:#67a3dd">select</span></div>
<div class="t" style="left:1450.64px;top:574.08px;font-size:26px;font-family:'Liberation Mono',monospace;color:#6e7681;transform:scaleX(0.9250);transform-origin:0 0;-webkit-text-stroke-width:0.45px;">21</div>
<div class="t" style="left:1531.5px;top:610.08px;font-size:26px;font-family:'Liberation Mono',monospace;color:#d4d4d4;transform:scaleX(0.9250);transform-origin:0 0;-webkit-text-stroke-width:0.45px;"><span style="color:#d4d4d4"></span></div>
<div class="t" style="left:1450.64px;top:610.08px;font-size:26px;font-family:'Liberation Mono',monospace;color:#6e7681;transform:scaleX(0.9250);transform-origin:0 0;-webkit-text-stroke-width:0.45px;">22</div>
<div class="t" style="left:1531.5px;top:646.08px;font-size:26px;font-family:'Liberation Mono',monospace;color:#d4d4d4;transform:scaleX(0.9250);transform-origin:0 0;-webkit-text-stroke-width:0.45px;"><span style="color:#d4d4d4">  </span><span style="color:#67a3dd">from</span><span style="color:#d4d4d4"> js.pub.stg_payments</span></div>
<div class="t" style="left:1450.64px;top:646.08px;font-size:26px;font-family:'Liberation Mono',monospace;color:#6e7681;transform:scaleX(0.9250);transform-origin:0 0;-webkit-text-stroke-width:0.45px;">23</div>
<div class="t" style="left:1531.5px;top:682.08px;font-size:26px;font-family:'Liberation Mono',monospace;color:#d4d4d4;transform:scaleX(0.9250);transform-origin:0 0;-webkit-text-stroke-width:0.45px;"><span style="color:#ffd700">)</span><span style="color:#d4d4d4">,</span></div>
<div class="t" style="left:1450.64px;top:682.08px;font-size:26px;font-family:'Liberation Mono',monospace;color:#6e7681;transform:scaleX(0.9250);transform-origin:0 0;-webkit-text-stroke-width:0.45px;">24</div>
<div class="t" style="left:1531.5px;top:718.08px;font-size:26px;font-family:'Liberation Mono',monospace;color:#d4d4d4;transform:scaleX(0.9250);transform-origin:0 0;-webkit-text-stroke-width:0.45px;"><span style="color:#d4d4d4">customer_orders</span><span style="color:#d4d4d4"> </span><span style="color:#67a3dd">as</span><span style="color:#d4d4d4"> </span><span style="color:#ffd700">(</span></div>
<div class="t" style="left:1450.64px;top:718.08px;font-size:26px;font-family:'Liberation Mono',monospace;color:#6e7681;transform:scaleX(0.9250);transform-origin:0 0;-webkit-text-stroke-width:0.45px;">25</div>
<div class="t" style="left:1531.5px;top:754.08px;font-size:26px;font-family:'Liberation Mono',monospace;color:#d4d4d4;transform:scaleX(0.9250);transform-origin:0 0;-webkit-text-stroke-width:0.45px;"><span style="color:#d4d4d4">  </span><span style="color:#67a3dd">select</span></div>
<div class="t" style="left:1450.64px;top:754.08px;font-size:26px;font-family:'Liberation Mono',monospace;color:#6e7681;transform:scaleX(0.9250);transform-origin:0 0;-webkit-text-stroke-width:0.45px;">26</div>
<div class="t" style="left:1531.5px;top:790.08px;font-size:26px;font-family:'Liberation Mono',monospace;color:#d4d4d4;transform:scaleX(0.9250);transform-origin:0 0;-webkit-text-stroke-width:0.45px;"><span style="color:#d4d4d4">    customer_id,</span></div>
<div class="t" style="left:1450.64px;top:790.08px;font-size:26px;font-family:'Liberation Mono',monospace;color:#6e7681;transform:scaleX(0.9250);transform-origin:0 0;-webkit-text-stroke-width:0.45px;">27</div>
<div class="t" style="left:1531.5px;top:826.08px;font-size:26px;font-family:'Liberation Mono',monospace;color:#d4d4d4;transform:scaleX(0.9250);transform-origin:0 0;-webkit-text-stroke-width:0.45px;"><span style="color:#d4d4d4">    </span><span style="color:#dcdcaa">min</span><span style="color:#da70d6">(</span><span style="color:#d4d4d4">order_date</span><span style="color:#da70d6">)</span><span style="color:#d4d4d4"> </span><span style="color:#67a3dd">as</span><span style="color:#d4d4d4"> </span><span style="color:#d4d4d4">first_order,</span></div>
<div class="t" style="left:1450.64px;top:826.08px;font-size:26px;font-family:'Liberation Mono',monospace;color:#6e7681;transform:scaleX(0.9250);transform-origin:0 0;-webkit-text-stroke-width:0.45px;">28</div>
<div class="t" style="left:1531.5px;top:862.08px;font-size:26px;font-family:'Liberation Mono',monospace;color:#d4d4d4;transform:scaleX(0.9250);transform-origin:0 0;-webkit-text-stroke-width:0.45px;"><span style="color:#d4d4d4">    </span><span style="color:#dcdcaa">max</span><span style="color:#da70d6">(</span><span style="color:#d4d4d4">order_date</span><span style="color:#da70d6">)</span><span style="color:#d4d4d4"> </span><span style="color:#67a3dd">as</span><span style="color:#d4d4d4"> </span><span style="color:#d4d4d4">most_recent_order,</span></div>
<div class="t" style="left:1450.64px;top:862.08px;font-size:26px;font-family:'Liberation Mono',monospace;color:#6e7681;transform:scaleX(0.9250);transform-origin:0 0;-webkit-text-stroke-width:0.45px;">29</div>
<div class="t" style="left:1531.5px;top:898.08px;font-size:26px;font-family:'Liberation Mono',monospace;color:#d4d4d4;transform:scaleX(0.9250);transform-origin:0 0;-webkit-text-stroke-width:0.45px;"><span style="color:#d4d4d4">    </span><span style="color:#dcdcaa">count</span><span style="color:#da70d6">(</span><span style="color:#d4d4d4">order_id</span><span style="color:#da70d6">)</span><span style="color:#d4d4d4"> </span><span style="color:#67a3dd">as</span><span style="color:#d4d4d4"> </span><span style="color:#d4d4d4">number_of_orders</span></div>
<div class="t" style="left:1450.64px;top:898.08px;font-size:26px;font-family:'Liberation Mono',monospace;color:#6e7681;transform:scaleX(0.9250);transform-origin:0 0;-webkit-text-stroke-width:0.45px;">30</div>
<div class="t" style="left:1531.5px;top:934.08px;font-size:26px;font-family:'Liberation Mono',monospace;color:#d4d4d4;transform:scaleX(0.9250);transform-origin:0 0;-webkit-text-stroke-width:0.45px;"><span style="color:#d4d4d4">  </span><span style="color:#67a3dd">from</span><span style="color:#d4d4d4"> orders</span></div>
<div class="t" style="left:1450.64px;top:934.08px;font-size:26px;font-family:'Liberation Mono',monospace;color:#6e7681;transform:scaleX(0.9250);transform-origin:0 0;-webkit-text-stroke-width:0.45px;">31</div>
<div class="t" style="left:1531.5px;top:970.08px;font-size:26px;font-family:'Liberation Mono',monospace;color:#d4d4d4;transform:scaleX(0.9250);transform-origin:0 0;-webkit-text-stroke-width:0.45px;"><span style="color:#d4d4d4">  </span><span style="color:#67a3dd">group by</span><span style="color:#d4d4d4"> customer_id</span></div>
<div class="t" style="left:1450.64px;top:970.08px;font-size:26px;font-family:'Liberation Mono',monospace;color:#6e7681;transform:scaleX(0.9250);transform-origin:0 0;-webkit-text-stroke-width:0.45px;">32</div>
<div class="t" style="left:1531.5px;top:1006.08px;font-size:26px;font-family:'Liberation Mono',monospace;color:#d4d4d4;transform:scaleX(0.9250);transform-origin:0 0;-webkit-text-stroke-width:0.45px;"><span style="color:#ffd700">)</span><span style="color:#d4d4d4">,</span></div>
<div class="t" style="left:1450.64px;top:1006.08px;font-size:26px;font-family:'Liberation Mono',monospace;color:#6e7681;transform:scaleX(0.9250);transform-origin:0 0;-webkit-text-stroke-width:0.45px;">33</div>
<div class="t" style="left:1531.5px;top:1042.08px;font-size:26px;font-family:'Liberation Mono',monospace;color:#d4d4d4;transform:scaleX(0.9250);transform-origin:0 0;-webkit-text-stroke-width:0.45px;"><span style="color:#d4d4d4">customer_payments</span><span style="color:#d4d4d4"> </span><span style="color:#67a3dd">as</span><span style="color:#d4d4d4"> </span><span style="color:#ffd700">(</span></div>
<div class="t" style="left:1450.64px;top:1042.08px;font-size:26px;font-family:'Liberation Mono',monospace;color:#6e7681;transform:scaleX(0.9250);transform-origin:0 0;-webkit-text-stroke-width:0.45px;">34</div>
</div></div>
<div class="t" style="left:153.4px;top:1088.08px;font-size:25.3px;font-family:'Liberation Sans',sans-serif;color:#9d9d9d;">Debug Console</div>
<div class="t" style="left:368.8px;top:1088.08px;font-size:25.3px;font-family:'Liberation Sans',sans-serif;color:#9d9d9d;">Problems</div>
<div class="t" style="left:517.5px;top:1088.08px;font-size:25.3px;font-family:'Liberation Sans',sans-serif;color:#9d9d9d;">Terminal</div>
<div class="t" style="left:657px;top:1088.08px;font-size:25.3px;font-family:'Liberation Sans',sans-serif;color:#dcdcdc;">Lineage</div>
<div class="t" style="left:787px;top:1088.08px;font-size:25.3px;font-family:'Liberation Sans',sans-serif;color:#9d9d9d;">Query Results</div>
<div class="t" style="left:988.7px;top:1088.08px;font-size:25.3px;font-family:'Liberation Sans',sans-serif;color:#9d9d9d;">Output</div>
<div class="t" style="left:784.988px;top:1286.88px;font-size:26px;font-family:'Liberation Mono',monospace;color:#0b1026;transform:scaleX(0.93);transform-origin:0 0;-webkit-text-stroke:0.5px #0b1026;">SED</div>
<div class="t" style="left:877.2px;top:1265.38px;font-size:28.6px;font-family:'Liberation Sans',sans-serif;color:#d4d4d4;transform:scaleX(1.01);transform-origin:0 0;">raw_customers</div>
<div class="t" style="left:1298.988px;top:1286.88px;font-size:26px;font-family:'Liberation Mono',monospace;color:#0b1026;transform:scaleX(0.93);transform-origin:0 0;-webkit-text-stroke:0.5px #0b1026;">MDL</div>
<div class="t" style="left:1391.2px;top:1265.38px;font-size:28.6px;font-family:'Liberation Sans',sans-serif;color:#d4d4d4;transform:scaleX(1.01);transform-origin:0 0;">stg_customers</div>
<div class="t" style="left:784.988px;top:1505.88px;font-size:26px;font-family:'Liberation Mono',monospace;color:#0b1026;transform:scaleX(0.93);transform-origin:0 0;-webkit-text-stroke:0.5px #0b1026;">SED</div>
<div class="t" style="left:877.2px;top:1484.38px;font-size:28.6px;font-family:'Liberation Sans',sans-serif;color:#d4d4d4;transform:scaleX(1.01);transform-origin:0 0;">raw_orders</div>
<div class="t" style="left:1298.988px;top:1505.88px;font-size:26px;font-family:'Liberation Mono',monospace;color:#0b1026;transform:scaleX(0.93);transform-origin:0 0;-webkit-text-stroke:0.5px #0b1026;">MDL</div>
<div class="t" style="left:1391.2px;top:1484.38px;font-size:28.6px;font-family:'Liberation Sans',sans-serif;color:#d4d4d4;transform:scaleX(1.01);transform-origin:0 0;">stg_orders</div>
<div class="t" style="left:784.988px;top:1724.88px;font-size:26px;font-family:'Liberation Mono',monospace;color:#0b1026;transform:scaleX(0.93);transform-origin:0 0;-webkit-text-stroke:0.5px #0b1026;">SED</div>
<div class="t" style="left:877.2px;top:1703.38px;font-size:28.6px;font-family:'Liberation Sans',sans-serif;color:#d4d4d4;transform:scaleX(1.01);transform-origin:0 0;">raw_payments</div>
<div class="t" style="left:1298.988px;top:1724.88px;font-size:26px;font-family:'Liberation Mono',monospace;color:#0b1026;transform:scaleX(0.93);transform-origin:0 0;-webkit-text-stroke:0.5px #0b1026;">MDL</div>
<div class="t" style="left:1391.2px;top:1703.38px;font-size:28.6px;font-family:'Liberation Sans',sans-serif;color:#d4d4d4;transform:scaleX(1.01);transform-origin:0 0;">stg_payments</div>
<div class="t" style="left:1803.988px;top:1504.88px;font-size:26px;font-family:'Liberation Mono',monospace;color:#0b1026;transform:scaleX(0.93);transform-origin:0 0;-webkit-text-stroke:0.5px #0b1026;">MDL</div>
<div class="t" style="left:1896.2px;top:1484.88px;font-size:28.6px;font-family:'Liberation Sans',sans-serif;color:#d4d4d4;transform:scaleX(1.01);transform-origin:0 0;">customers</div>
<div class="t" style="left:231px;top:1883.96px;font-size:25.2px;font-family:'Liberation Sans',sans-serif;color:#cccccc;">0</div>
<div class="t" style="left:288px;top:1883.96px;font-size:25.2px;font-family:'Liberation Sans',sans-serif;color:#cccccc;">0</div>
<div class="t" style="left:369px;top:1883.96px;font-size:25.2px;font-family:'Liberation Sans',sans-serif;color:#cccccc;">0</div>
<div class="t" style="left:451.5px;top:1883.96px;font-size:25.2px;font-family:'Liberation Sans',sans-serif;color:#cccccc;">dbt Extension (unregistered)</div>
<div class="t" style="left:1858px;top:1883.96px;font-size:25.2px;font-family:'Liberation Sans',sans-serif;color:#cccccc;">Cursor Tab</div>
<div class="t" style="left:2014px;top:1883.96px;font-size:25.2px;font-family:'Liberation Sans',sans-serif;color:#cccccc;">Ln 15, Col 22</div>
<div class="t" style="left:2199px;top:1883.96px;font-size:25.2px;font-family:'Liberation Sans',sans-serif;color:#cccccc;">Spaces: 2</div>
<div class="t" style="left:2343.5px;top:1883.96px;font-size:25.2px;font-family:'Liberation Sans',sans-serif;color:#cccccc;">UTF-8</div>
<div class="t" style="left:2448.5px;top:1883.96px;font-size:25.2px;font-family:'Liberation Sans',sans-serif;color:#cccccc;">LF</div>
<div class="t" style="left:2508px;top:1885.15px;font-size:23.8px;font-family:'Liberation Sans',sans-serif;color:#cccccc;">MS SQL</div>
</div></div>
<div id="winborder"></div>
</body></html>
